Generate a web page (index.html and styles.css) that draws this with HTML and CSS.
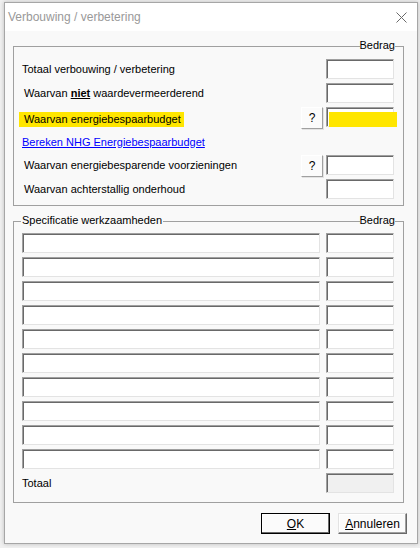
FILE: index.html
```html
<!DOCTYPE html>
<html>
<head>
<meta charset="utf-8">
<link rel="stylesheet" href="styles.css">
</head>
<body>
<div class="window">
  <div class="titlebar">
    <span class="title">Verbouwing / verbetering</span>
    <svg class="close" width="11" height="11" viewBox="0 0 11 11"><path d="M0.5 0.5 L10.5 10.5 M10.5 0.5 L0.5 10.5" stroke="#6a6a6a" stroke-width="1" fill="none"/></svg>
  </div>
  <div class="content">
    <div class="gb gb1">
      <span class="legend legend-right">Bedrag</span>
      <div class="row">
        <span class="lbl">Totaal verbouwing / verbetering</span>
        <span class="fld"></span>
      </div>
      <div class="row">
        <span class="lbl ind">Waarvan <b class="niet">niet</b> waardevermeerderend</span>
        <span class="fld"></span>
      </div>
      <div class="row">
        <span class="lbl"><span class="hl">Waarvan energiebespaarbudget</span></span>
        <span class="qbtn">?</span>
        <span class="fld"><span class="fill-yellow"></span></span>
      </div>
      <div class="row">
        <a class="link" href="#">Bereken NHG Energiebespaarbudget</a>
      </div>
      <div class="row">
        <span class="lbl ind">Waarvan energiebesparende voorzieningen</span>
        <span class="qbtn">?</span>
        <span class="fld"></span>
      </div>
      <div class="row">
        <span class="lbl ind">Waarvan achterstallig onderhoud</span>
        <span class="fld"></span>
      </div>
    </div>

    <div class="gb gb2">
      <span class="legend legend-left">Specificatie werkzaamheden</span>
      <span class="legend legend-right">Bedrag</span>
      <div class="row spec"><span class="fld wide"></span><span class="fld"></span></div>
      <div class="row spec"><span class="fld wide"></span><span class="fld"></span></div>
      <div class="row spec"><span class="fld wide"></span><span class="fld"></span></div>
      <div class="row spec"><span class="fld wide"></span><span class="fld"></span></div>
      <div class="row spec"><span class="fld wide"></span><span class="fld"></span></div>
      <div class="row spec"><span class="fld wide"></span><span class="fld"></span></div>
      <div class="row spec"><span class="fld wide"></span><span class="fld"></span></div>
      <div class="row spec"><span class="fld wide"></span><span class="fld"></span></div>
      <div class="row spec"><span class="fld wide"></span><span class="fld"></span></div>
      <div class="row spec"><span class="fld wide"></span><span class="fld"></span></div>
      <div class="row">
        <span class="lbl">Totaal</span>
        <span class="fld disabled"></span>
      </div>
    </div>

    <div class="buttons">
      <span class="btn default"><u>O</u>K</span>
      <span class="btn"><u>A</u>nnuleren</span>
    </div>
  </div>
</div>
</body>
</html>
```

FILE: styles.css
```css
html, body {
  margin: 0;
  padding: 0;
}
body {
  background: #f0f0f0;
  width: 420px;
  height: 548px;
  overflow: hidden;
  font-family: "Liberation Sans", Arial, sans-serif;
  font-size: 11px;
  color: #000;
}
.window {
  box-sizing: border-box;
  margin: 2px 0 0 4px;
  width: 414px;
  height: 542px;
  border: 1px solid #a6a6a6;
  background: #f9f9f9;
  box-shadow: 0 0 4px rgba(0, 0, 0, 0.22);
  display: flex;
  flex-direction: column;
}
.titlebar {
  height: 28px;
  background: #ffffff;
  display: flex;
  align-items: center;
  justify-content: space-between;
  padding: 0 10px 0 3px;
  flex: none;
}
.title {
  font-size: 12px;
  color: #999999;
}
.close {
  display: block;
}
.content {
  padding: 15px 13px 0 8px;
}
.gb {
  position: relative;
  box-sizing: border-box;
  width: 391px;
  border: 1px solid #a0a0a0;
}
.gb1 {
  padding: 12px 9px 6px 8px;
}
.gb2 {
  margin-top: 15px;
  padding: 11px 9px 9px 8px;
}
.legend {
  position: absolute;
  top: -8px;
  line-height: 13px;
  background: #f9f9f9;
}
.legend-right {
  right: 8px;
}
.legend-left {
  left: 7px;
  padding: 0 1px;
}
.row {
  display: flex;
  align-items: flex-start;
  height: 20px;
  margin-top: 4px;
}
.row:first-of-type,
.gb .legend + .row,
.gb .legend + .legend + .row {
  margin-top: 0;
}
.lbl {
  flex: 1;
  align-self: center;
  white-space: nowrap;
}
.lbl.ind {
  padding-left: 2px;
}
.niet {
  text-decoration: underline;
}
.hl {
  display: inline-block;
  margin-left: -3px;
  margin-top: 5px;
  padding: 0 3px 0 5px;
  height: 15px;
  line-height: 15px;
  background: #ffe600;
}
.row .lbl:has(.hl) {
  align-self: flex-start;
}
.link {
  align-self: center;
  color: #0000ff;
  text-decoration: underline;
  margin-top: 1px;
}
.fld {
  box-sizing: border-box;
  display: block;
  width: 68px;
  height: 20px;
  background: #ffffff;
  border: 1px solid;
  border-color: #a0a0a0 #e3e3e3 #e3e3e3 #a0a0a0;
  box-shadow: inset 1px 1px 0 #696969;
  flex: none;
}
.fld.wide {
  flex: 1;
  width: auto;
  margin-right: 6px;
}
.fld.disabled {
  background: #f0f0f0;
}
.fill-yellow {
  display: block;
  margin: 4px 0 0 2px;
  width: 68px;
  height: 15px;
  background: #ffe600;
}
.qbtn {
  box-sizing: border-box;
  width: 22px;
  height: 22px;
  margin-right: 3px;
  flex: none;
  display: flex;
  align-items: center;
  justify-content: center;
  background: #fbfbfb;
  border: 1px solid;
  border-color: #ffffff #a0a0a0 #a0a0a0 #ffffff;
  box-shadow: 1px 1px 0 #e3e3e3;
  font-size: 12px;
}
.buttons {
  display: flex;
  justify-content: flex-end;
  gap: 8px;
  margin-top: 10px;
  margin-right: -3px;
}
.btn {
  box-sizing: border-box;
  width: 69px;
  height: 21px;
  display: flex;
  align-items: center;
  justify-content: center;
  background: #fbfbfb;
  border: 1px solid;
  border-color: #e3e3e3 #696969 #696969 #e3e3e3;
  box-shadow: inset -1px -1px 0 #a0a0a0, inset 1px 1px 0 #ffffff;
  font-size: 12px;
}
.btn.default {
  border-color: #000000;
  box-shadow: inset -1px -1px 0 #696969, inset 1px 1px 0 #ffffff;
}
```
